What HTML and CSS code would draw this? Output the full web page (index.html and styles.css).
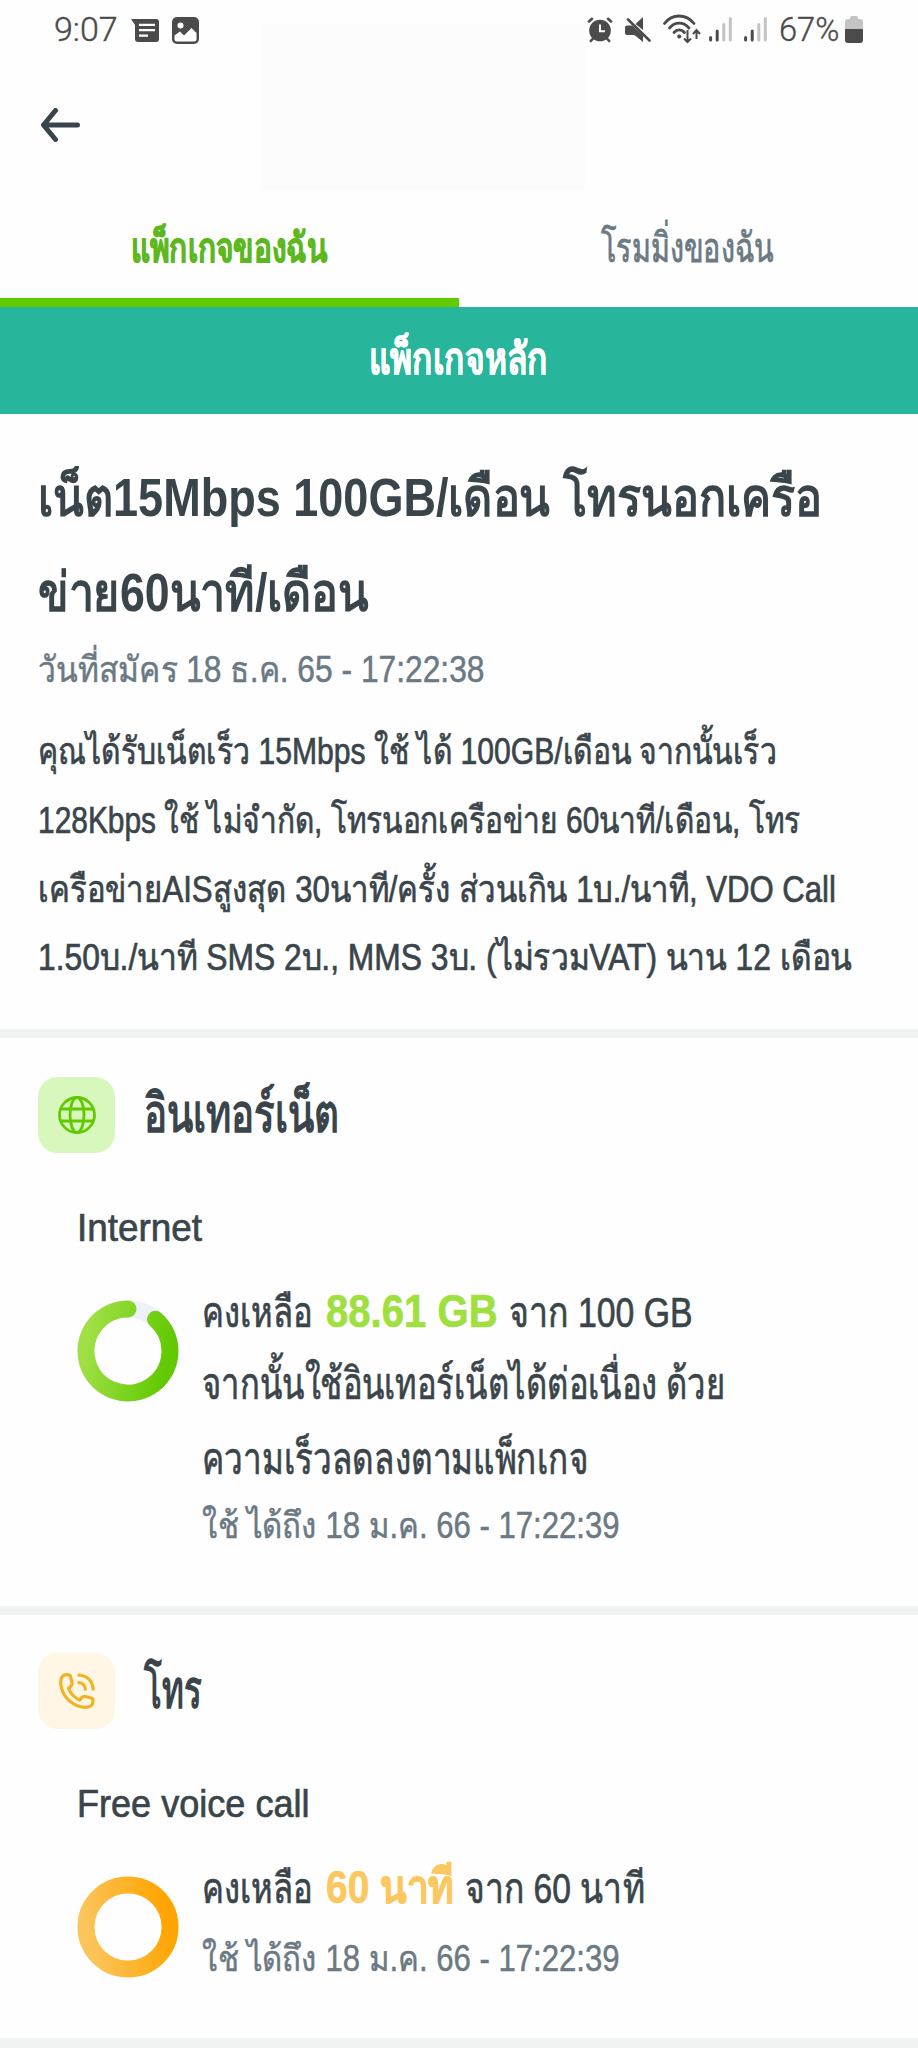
FILE: index.html
```html
<!DOCTYPE html>
<html lang="th">
<head>
    <meta charset="UTF-8">
    <meta name="viewport" content="width=device-width, initial-scale=1.0">
    <title>แพ็กเกจของฉัน</title>
    <link rel="stylesheet" href="styles.css">
</head>
<body>
    <div class="status-bar">
        <span class="clock">9:07</span>
        <svg class="ic-message" width="28" height="24" viewBox="0 0 28 24">
            <path fill="#4b4b4b" d="M0 0H25a3 3 0 0 1 3 3V20a3 3 0 0 1-3 3H7a3 3 0 0 1-3-3V6Z"/>
            <path stroke="#fff" stroke-width="2.2" d="M8 5.8H24M8 11.2H24M8 16.6H17"/>
        </svg>
        <svg class="ic-image" width="27" height="27" viewBox="0 0 27 27">
            <rect width="27" height="27" rx="5" fill="#4b4b4b"/>
            <circle cx="8.500" cy="8.500" r="3" fill="#fff"/>
            <path fill="#fff" d="M2.500 18.500 8 14.500 12 18.500 19.500 11 24.500 16V22a2.500 2.500 0 0 1-2.500 2.500H5A2.500 2.500 0 0 1 2.500 22Z"/>
        </svg>
        <div class="status-right">
            <svg class="ic-alarm" width="26" height="26" viewBox="0 0 26 26">
                <g stroke="#4b4b4b" stroke-width="2.600" stroke-linecap="round">
                    <path d="M2 4.500 5 1.800M24 4.500 21 1.800M6 21.500 3.800 24M20 21.500 22.200 24"/>
                </g>
                <circle cx="13" cy="13.500" r="10.800" fill="#4b4b4b"/>
                <path fill="none" stroke="#fff" stroke-width="2" d="M13 7.500V14.300H18"/>
            </svg>
            <svg class="ic-mute" width="26" height="26" viewBox="0 0 26 26">
                <path fill="#4b4b4b" d="M0 10.500a2 2 0 0 1 2-2H7L18 18.500V25L9.500 18H2a2 2 0 0 1-2-2ZM10.500 7 18 0V13Z"/>
                <path stroke="#4b4b4b" stroke-width="2.600" stroke-linecap="round" d="M3 2.500 24.500 23.500"/>
            </svg>
            <svg class="ic-wifi" width="38" height="30" viewBox="0 0 38 30">
                <g fill="none" stroke="#4b4b4b" stroke-width="2.800" stroke-linecap="round">
                    <path d="M1.500 9.500C9-.5 23-.5 31 9.500"/>
                    <path d="M6.500 14C12 7.500 20.500 7.500 26 14"/>
                    <path d="M11 18.500C14 15 18.500 15 21.500 18.500"/>
                </g>
                <circle cx="16.200" cy="22.500" r="2" fill="#4b4b4b"/>
                <path fill="none" stroke="#4b4b4b" stroke-width="2" d="M24.500 16V28M21 24.500 24.500 28 28 24.500M33.500 25V16M30 20 33.500 16 37 20"/>
            </svg>
            <svg class="ic-signal" width="23" height="25" viewBox="0 0 23 25">
                <path stroke="#4b4b4b" stroke-width="3" stroke-linecap="round" d="M1.600 20.500V23M8.200 14V23"/>
                <path stroke="#c4c4c4" stroke-width="3" stroke-linecap="round" d="M14.800 7.500V23M21.300 1.600V23"/>
            </svg>
            <svg class="ic-signal" width="23" height="25" viewBox="0 0 23 25">
                <path stroke="#4b4b4b" stroke-width="3" stroke-linecap="round" d="M1.600 20.500V23M8.200 14V23"/>
                <path stroke="#c4c4c4" stroke-width="3" stroke-linecap="round" d="M14.800 7.500V23M21.300 1.600V23"/>
            </svg>
            <span class="battery-text"><span class="fit">67%</span></span>
            <svg class="ic-battery" width="18" height="27" viewBox="0 0 18 27">
                <path fill="#c4c4c4" d="M5 2a2 2 0 0 1 2-2H11a2 2 0 0 1 2 2V3H15a3 3 0 0 1 3 3V13H0V6A3 3 0 0 1 3 3H5Z"/>
                <path fill="#4b4b4b" d="M0 13H18V24a3 3 0 0 1-3 3H3a3 3 0 0 1-3-3Z"/>
            </svg>
        </div>
    </div>

    <header class="app-bar">
        <svg class="back" width="39" height="34" viewBox="0 0 39 34">
            <path fill="none" stroke="#38444c" stroke-width="5" stroke-linecap="round" stroke-linejoin="round" d="M14.500 2.500 2.500 17 14.500 31.500M3 17H36.500"/>
        </svg>
        <div class="title-box"></div>
    </header>

    <nav class="tabs">
        <div class="tab active"><span class="fit">แพ็กเกจของฉัน</span></div>
        <div class="tab"><span class="fit">โรมมิ่งของฉัน</span></div>
    </nav>

    <div class="banner"><span class="fit">แพ็กเกจหลัก</span></div>

    <section class="package">
        <h1>
            <span class="fit title-1">เน็ต15Mbps 100GB/เดือน โทรนอกเครือ</span>
            <span class="fit title-2">ข่าย60นาที/เดือน</span>
        </h1>
        <div class="date"><span class="fit">วันที่สมัคร 18 ธ.ค. 65 - 17:22:38</span></div>
        <p class="detail">
            <span class="fit detail-1">คุณได้รับเน็ตเร็ว 15Mbps ใช้ ได้ 100GB/เดือน จากนั้นเร็ว</span>
            <span class="fit detail-2">128Kbps ใช้ ไม่จำกัด, โทรนอกเครือข่าย 60นาที/เดือน, โทร</span>
            <span class="fit detail-3">เครือข่ายAISสูงสุด 30นาที/ครั้ง ส่วนเกิน 1บ./นาที, VDO Call</span>
            <span class="fit detail-4">1.50บ./นาที SMS 2บ., MMS 3บ. (ไม่รวมVAT) นาน 12 เดือน</span>
        </p>
    </section>

    <section class="usage internet">
        <div class="usage-head">
            <div class="icon">
                <svg width="38" height="38" viewBox="0 0 38 38" fill="none" stroke="#62c900" stroke-width="2.800">
                    <circle cx="19" cy="19" r="17.500"/>
                    <ellipse cx="19" cy="19" rx="7" ry="17.500"/>
                    <path d="M2.500 13H35.500M2.500 25H35.500"/>
                </svg>
            </div>
            <h2><span class="fit">อินเทอร์เน็ต</span></h2>
        </div>
        <div class="name"><span class="fit">Internet</span></div>
        <div class="usage-body">
            <svg class="ring" width="102" height="102" viewBox="0 0 102 102">
                <defs>
                    <linearGradient id="green" x1="0" y1="0.400" x2="1" y2="0.600">
                        <stop offset="0" stop-color="#a0e046"/>
                        <stop offset="1" stop-color="#60c900"/>
                    </linearGradient>
                </defs>
                <circle cx="51" cy="51" r="42" fill="none" stroke="#eef2f8" stroke-width="17"/>
                <path fill="none" stroke="url(#green)" stroke-width="17" stroke-linecap="round" d="M51 9A42 42 0 1 0 78.500 19.300"/>
            </svg>
            <div class="info">
                <div class="remain">
                    <span class="seg seg-label"><span class="fit">คงเหลือ</span></span>
                    <strong class="seg seg-value"><span class="fit">88.61 GB</span></strong>
                    <span class="seg seg-total"><span class="fit">จาก 100 GB</span></span>
                </div>
                <div class="note note-1"><span class="fit">จากนั้นใช้อินเทอร์เน็ตได้ต่อเนื่อง ด้วย</span></div>
                <div class="note note-2"><span class="fit">ความเร็วลดลงตามแพ็กเกจ</span></div>
                <div class="expire"><span class="fit">ใช้ ได้ถึง 18 ม.ค. 66 - 17:22:39</span></div>
            </div>
        </div>
    </section>

    <section class="usage voice">
        <div class="usage-head">
            <div class="icon">
                <svg width="36" height="36" viewBox="0 0 36 36" fill="none" stroke="#f0b323" stroke-width="3.200" stroke-linejoin="round">
                    <path d="M7.500 1.700C3 2.200 1.500 5.500 1.700 10 2.500 23 13 34 26.500 34.300 31 34.300 33.700 32.500 34 28.500 34.300 26.500 33.800 25.500 32.300 25L26.500 23.500C25 23.200 24 23.600 23 24.500L20.500 27C15.500 24.500 11.500 20.500 9.500 15.500L12 13C13 12 13.400 11 13 9.500L11.500 3.500C11 1.800 9.500 1.500 7.500 1.700Z"/>
                    <path d="M18.500 2C28 2 34 8 34.200 17.500M18.500 9.500C24 9.500 26.500 12 26.500 17.500"/>
                </svg>
            </div>
            <h2><span class="fit">โทร</span></h2>
        </div>
        <div class="name"><span class="fit">Free voice call</span></div>
        <div class="usage-body">
            <svg class="ring" width="102" height="102" viewBox="0 0 102 102">
                <defs>
                    <linearGradient id="orange" x1="0" y1="0.600" x2="1" y2="0.400">
                        <stop offset="0" stop-color="#fbc55c"/>
                        <stop offset="1" stop-color="#ffa400"/>
                    </linearGradient>
                </defs>
                <circle cx="51" cy="51" r="42" fill="none" stroke="url(#orange)" stroke-width="17"/>
            </svg>
            <div class="info">
                <div class="remain">
                    <span class="seg seg-label"><span class="fit">คงเหลือ</span></span>
                    <strong class="seg seg-value"><span class="fit">60 นาที</span></strong>
                    <span class="seg seg-total"><span class="fit">จาก 60 นาที</span></span>
                </div>
                <div class="expire"><span class="fit">ใช้ ได้ถึง 18 ม.ค. 66 - 17:22:39</span></div>
            </div>
        </div>
    </section>
</body>
</html>
```
FILE: styles.css
```css
* {
    box-sizing: border-box;
}
body {
    margin: 0;
    width: 918px;
    height: 2048px;
    overflow: hidden;
    background: #fefefe;
    color: #3a454b;
    font-family: "Liberation Sans", Arial, sans-serif;
    white-space: nowrap;
}
svg {
    display: block;
    flex: none;
}
h1, h2, p {
    margin: 0;
}

/* condensed text, every line sets its own ratio */
.fit {
    display: inline-block;
    transform: scaleX(var(--fit, 1));
    transform-origin: left center;
}

/* status bar */
.status-bar {
    display: flex;
    height: 60px;
    padding: 0 55px 0 54px;
    font: 300 34px/59px Roboto, sans-serif;
    color: #4b4b4b;
    -webkit-text-stroke: 0.4px;
}
.clock {
    width: 77px;
}
.ic-message {
    margin-top: 19px;
}
.ic-image {
    margin: 17px 0 0 13px;
}
.status-right {
    display: flex;
    margin-left: auto;
}
.ic-alarm {
    margin: 17px 12px 0 0;
}
.ic-mute {
    margin: 17px 12px 0 0;
}
.ic-wifi {
    margin: 14px 8px 0 0;
}
.ic-signal {
    margin: 17px 12px 0 0;
}
.battery-text {
    width: 66px;
}
.battery-text .fit {
    --fit: 0.96;
}
.ic-battery {
    margin-top: 16px;
}

/* app bar */
.app-bar {
    position: relative;
    height: 133px;
    padding: 48px 41px;
}
.title-box {
    position: absolute;
    left: 261px;
    top: -36px;
    width: 324px;
    height: 166px;
    background: #fcfcfc;
}

/* tabs */
.tabs {
    display: flex;
    height: 114px;
}
.tab {
    width: 459px;
    padding: 26px 2px 0 0;
    text-align: center;
    font-size: 41px;
    line-height: 58px;
    color: #6a7983;
    -webkit-text-stroke: 0.8px;
}
.tab .fit {
    --fit: 0.7;
    transform-origin: center;
}
.tab.active {
    border-bottom: 9px solid #62cb00;
    color: #5cb81e;
    font-weight: bold;
}
.tab.active .fit {
    --fit: 0.727;
}

.banner {
    height: 107px;
    padding-right: 2px;
    background: #27b59b;
    color: #fff;
    text-align: center;
    font-size: 44px;
    font-weight: bold;
    line-height: 104px;
    -webkit-text-stroke: 0.5px;
}
.banner .fit {
    --fit: 0.761;
    transform-origin: center;
}

/* main package */
.package {
    height: 624px;
    padding: 36px 38px 0;
    border-bottom: 9px solid #f1f3f3;
}
h1 {
    display: flex;
    flex-direction: column;
    align-items: flex-start;
    font-size: 54px;
    line-height: 95px;
}
.title-1 {
    --fit: 0.834;
}
.title-2 {
    --fit: 0.828;
}
.date {
    font-size: 36px;
    line-height: 60px;
    color: #6a7983;
    -webkit-text-stroke: 0.5px;
}
.date .fit {
    --fit: 0.882;
}
.detail {
    display: flex;
    flex-direction: column;
    align-items: flex-start;
    margin-top: 18px;
    font-size: 37px;
    line-height: 68.8px;
    -webkit-text-stroke: 0.7px;
}
.detail-1 {
    --fit: 0.813;
}
.detail-2 {
    --fit: 0.808;
}
.detail-3 {
    --fit: 0.841;
}
.detail-4 {
    --fit: 0.859;
}

/* usage sections */
.usage {
    padding: 39px 38px 0;
    border-bottom: 9px solid #f1f3f3;
}
.internet {
    height: 577px;
}
.voice {
    height: 433px;
    padding-top: 38px;
    border-bottom-width: 10px;
}
.usage-head {
    display: flex;
    gap: 29px;
}
.icon {
    display: flex;
    align-items: center;
    justify-content: center;
    width: 77px;
    height: 76px;
    border-radius: 20px;
}
.internet .icon {
    background: #d8f7bd;
}
.voice .icon {
    background: #fff6e5;
}
h2 {
    font-size: 54px;
    line-height: 73px;
}
.internet h2 .fit {
    --fit: 0.711;
}
.voice h2 .fit {
    --fit: 0.613;
}
.name {
    margin-top: 50px;
    padding-left: 39px;
    font-size: 39px;
    line-height: 50px;
    -webkit-text-stroke: 0.7px;
}
.internet .name .fit {
    --fit: 0.945;
}
.voice .name .fit {
    --fit: 0.925;
}
.usage-body {
    display: flex;
    gap: 23px;
    padding: 24px 0 0 38px;
}
.ring {
    margin: 23px 0 0 1px;
}
.info {
    -webkit-text-stroke: 0.7px;
}
.remain {
    display: flex;
    height: 69px;
    font-size: 42px;
    line-height: 71px;
}
.seg-label {
    width: 124px;
}
.seg-label .fit {
    --fit: 0.78;
}
.seg-value {
    width: 183px;
    font-size: 47px;
    line-height: 68px;
}
.internet .seg-value {
    color: #9fe03f;
}
.internet .seg-value .fit {
    --fit: 0.853;
}
.internet .seg-total .fit {
    --fit: 0.805;
}
.voice .remain {
    height: 76px;
}
.voice .seg-value {
    width: 139px;
    color: #fcc75f;
}
.voice .seg-value .fit {
    --fit: 0.828;
}
.voice .seg-total .fit {
    --fit: 0.8;
}
.note {
    font-size: 44px;
    line-height: 75px;
}
.note-1 .fit {
    --fit: 0.744;
}
.note-2 .fit {
    --fit: 0.756;
}
.expire {
    font-size: 36px;
    line-height: 60px;
    color: #6a7983;
    -webkit-text-stroke: 0.5px;
}
.expire .fit {
    --fit: 0.864;
}
```
